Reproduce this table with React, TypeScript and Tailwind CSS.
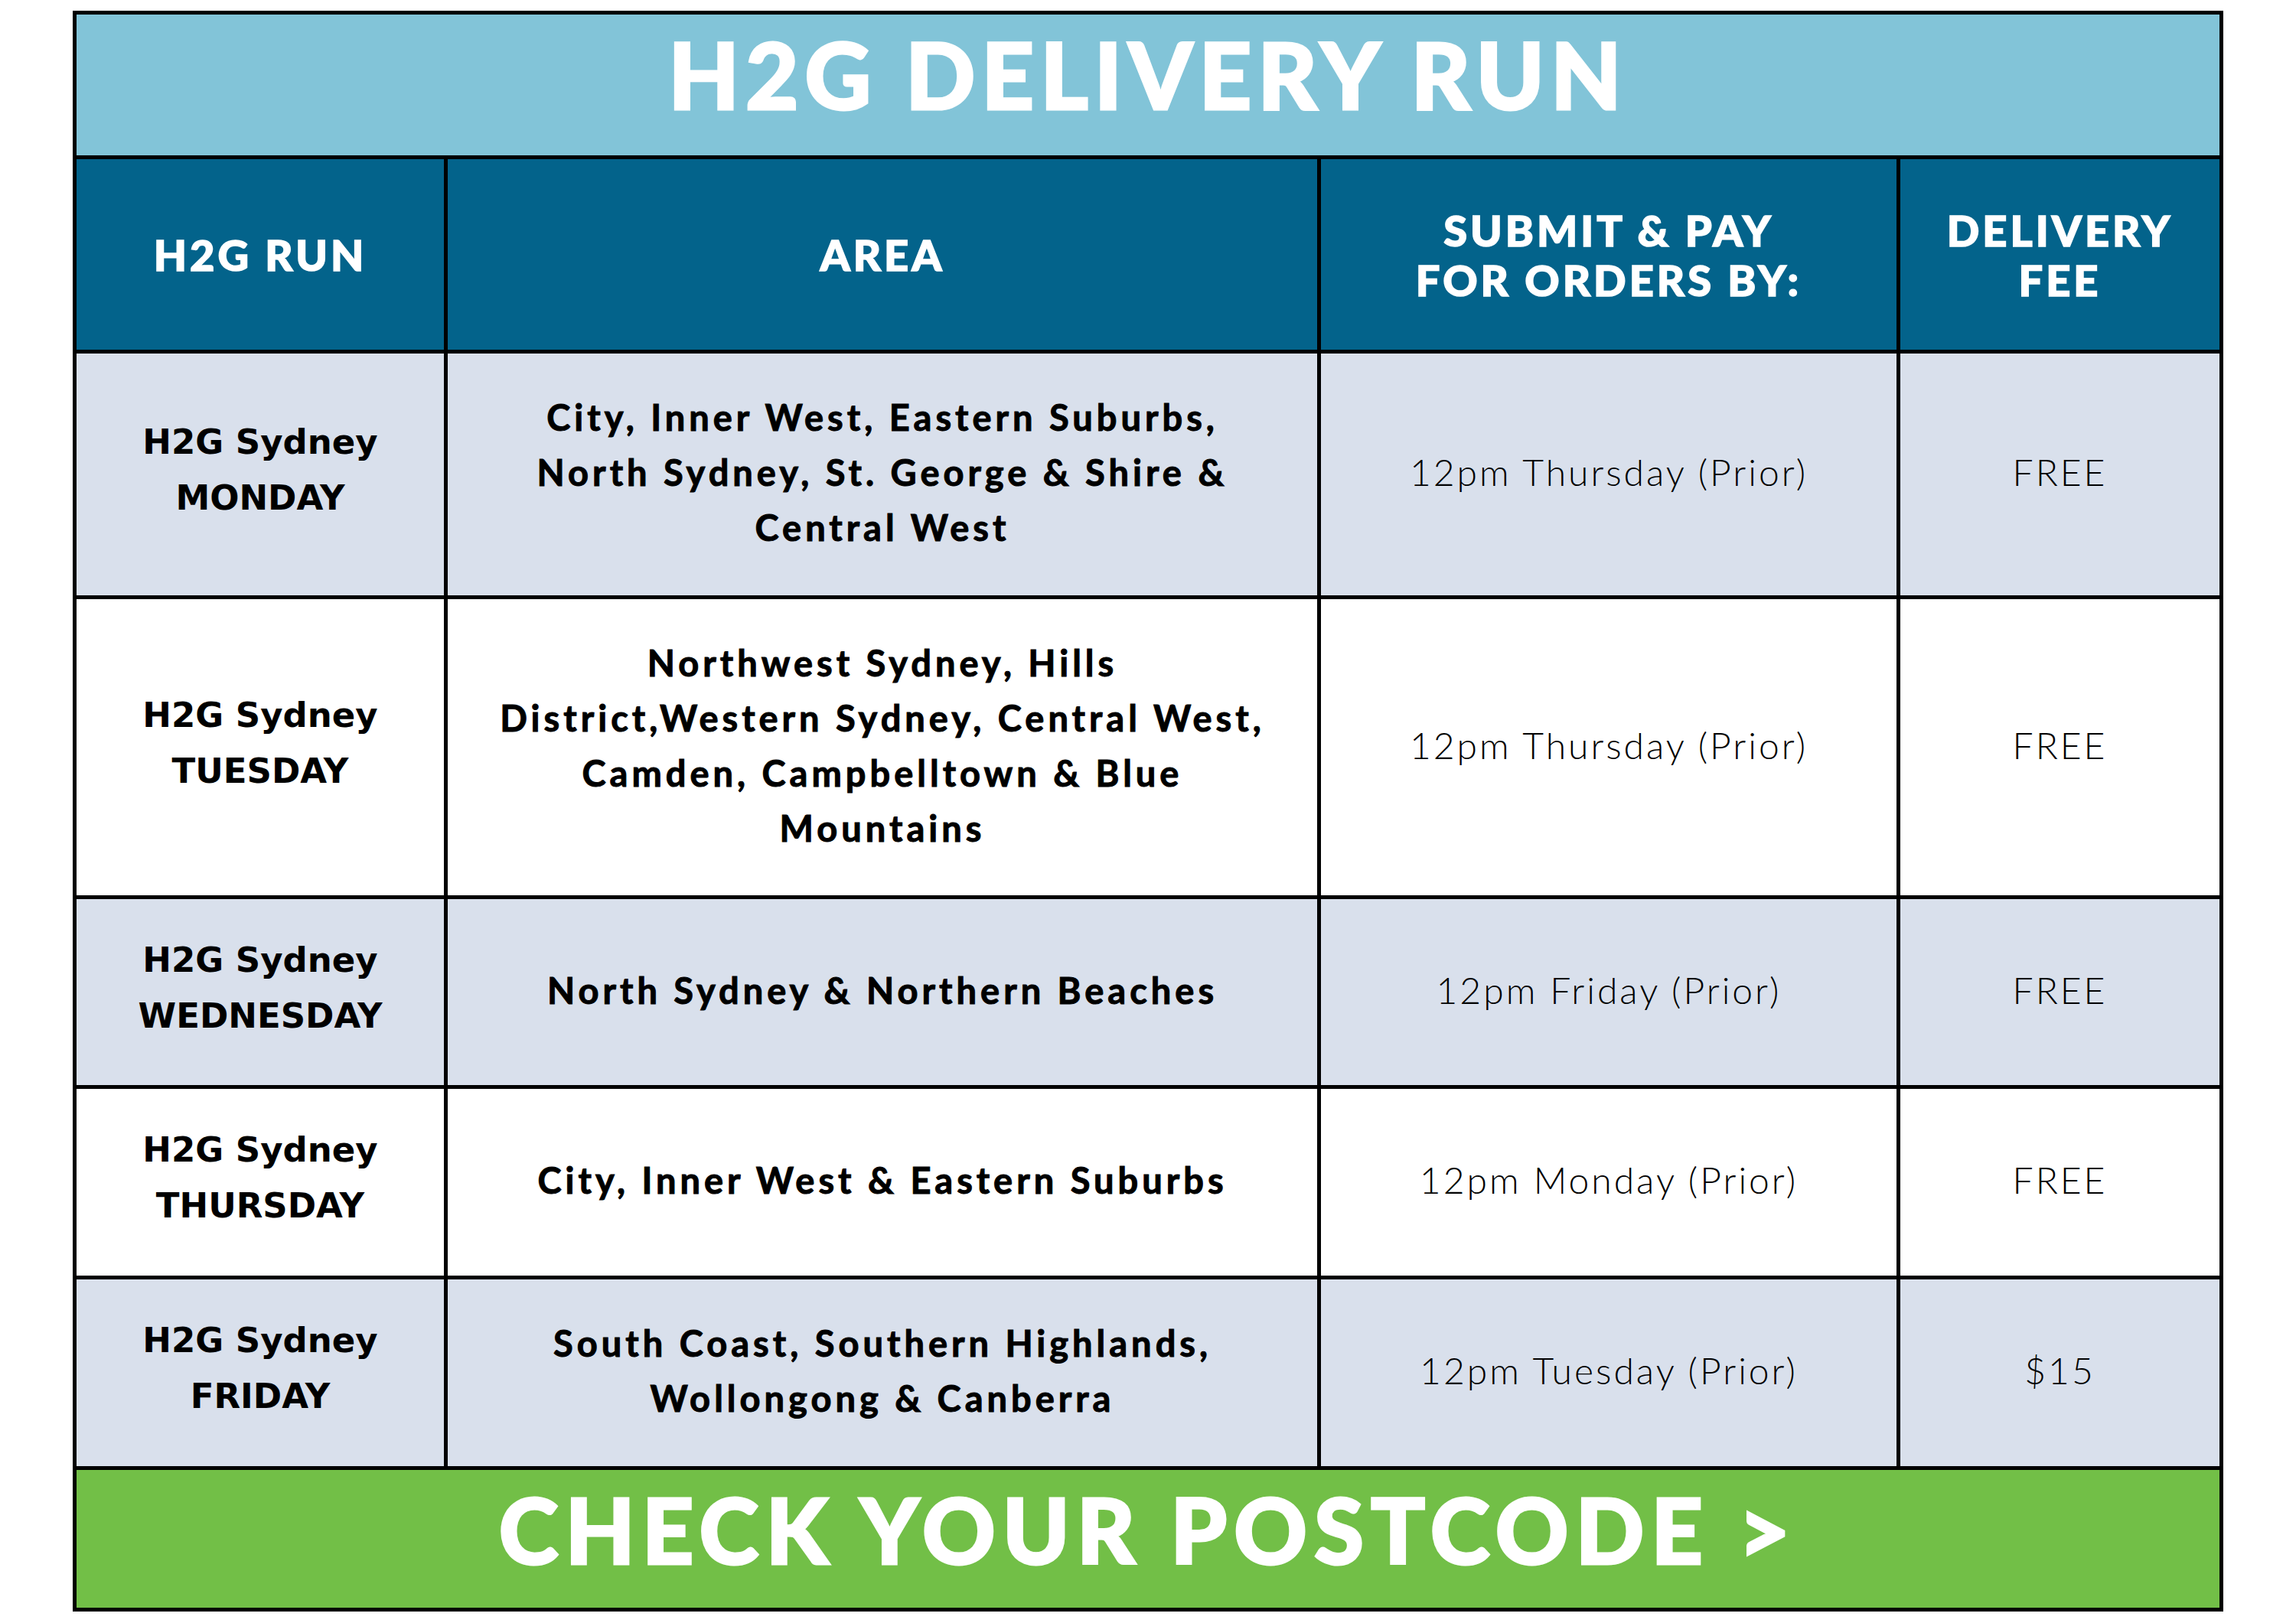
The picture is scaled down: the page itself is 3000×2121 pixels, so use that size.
const rows = [
  {
    run: ["H2G Sydney", "MONDAY"],
    area: ["City, Inner West, Eastern Suburbs,", "North Sydney, St. George & Shire &", "Central West"],
    by: "12pm Thursday (Prior)",
    fee: "FREE",
    shade: true,
    h: "h-[316px]",
  },
  {
    run: ["H2G Sydney", "TUESDAY"],
    area: ["Northwest Sydney, Hills", "District,Western Sydney, Central West,", "Camden, Campbelltown & Blue", "Mountains"],
    by: "12pm Thursday (Prior)",
    fee: "FREE",
    shade: false,
    h: "h-[387px]",
  },
  {
    run: ["H2G Sydney", "WEDNESDAY"],
    area: ["North Sydney & Northern Beaches"],
    by: "12pm Friday (Prior)",
    fee: "FREE",
    shade: true,
    h: "h-[243px]",
  },
  {
    run: ["H2G Sydney", "THURSDAY"],
    area: ["City, Inner West & Eastern Suburbs"],
    by: "12pm Monday (Prior)",
    fee: "FREE",
    shade: false,
    h: "h-[244px]",
  },
  {
    run: ["H2G Sydney", "FRIDAY"],
    area: ["South Coast, Southern Highlands,", "Wollongong & Canberra"],
    by: "12pm Tuesday (Prior)",
    fee: "$15",
    shade: true,
    h: "h-[244px]",
  },
];

function Lines({ lines }: { lines: string[] }) {
  return (
    <>
      {lines.map((l) => (
        <div key={l}>{l}</div>
      ))}
    </>
  );
}

export default function App() {
  return (
    <div className="min-h-[2121px] w-[3000px] bg-white pt-[14px] font-['Lato',sans-serif]">
      <div className="ml-[95px] flex w-[2810px] flex-col gap-[5px] bg-black p-[5px]">
        <div className="flex h-[184px] items-center justify-center bg-[#82c4d8] pb-[28px]">
          <h1 className="text-[120px] leading-none font-black tracking-[8px] text-white [-webkit-text-stroke:3px_white]">
            H2G DELIVERY RUN
          </h1>
        </div>

        <div className="grid grid-cols-[480px_1136px_752px_417px] gap-[5px]">
          <div className="flex h-[249px] items-center justify-center bg-[#03638b] text-[56px] leading-[65px] font-black tracking-[4px] text-white [-webkit-text-stroke:1.5px_white]">
            H2G RUN
          </div>
          <div className="flex items-center justify-center bg-[#03638b] text-[56px] leading-[65px] font-black tracking-[4px] text-white [-webkit-text-stroke:1.5px_white]">
            AREA
          </div>
          <div className="flex flex-col items-center justify-center bg-[#03638b] text-center text-[56px] leading-[65px] font-black tracking-[4px] text-white [-webkit-text-stroke:1.5px_white]">
            <div>SUBMIT &amp; PAY</div>
            <div>FOR ORDERS BY:</div>
          </div>
          <div className="flex flex-col items-center justify-center bg-[#03638b] text-center text-[56px] leading-[65px] font-black tracking-[4px] text-white [-webkit-text-stroke:1.5px_white]">
            <div>DELIVERY</div>
            <div>FEE</div>
          </div>

          {rows.map((r) => {
            const bg = r.shade ? "bg-[#d9e0ec]" : "bg-white";
            return (
              <div key={r.run[1]} className="contents">
                <div className={`${bg} ${r.h} flex flex-col items-center justify-center pb-[12px] text-center font-['DejaVu_Sans',sans-serif] text-[45px] leading-[73px] font-bold text-black`}>
                  <Lines lines={r.run} />
                </div>
                <div className={`${bg} flex flex-col items-center justify-center pb-[6px] text-center text-[47px] leading-[72px] font-bold tracking-[5px] text-black [-webkit-text-stroke:1px_black]`}>
                  <Lines lines={r.area} />
                </div>
                <div className={`${bg} flex items-center justify-center pb-[6px] text-[48px] leading-[72px] font-light tracking-[3px] text-black`}>
                  {r.by}
                </div>
                <div className={`${bg} flex items-center justify-center pb-[6px] text-[48px] leading-[72px] font-light tracking-[3px] text-black`}>
                  {r.fee}
                </div>
              </div>
            );
          })}
        </div>

        <div className="flex h-[180px] items-center justify-center bg-[#72bf47] pb-[24px]">
          <div className="text-[118px] leading-none font-black tracking-[9px] text-white [-webkit-text-stroke:3px_white]">
            CHECK YOUR POSTCODE &gt;
          </div>
        </div>
      </div>
    </div>
  );
}
